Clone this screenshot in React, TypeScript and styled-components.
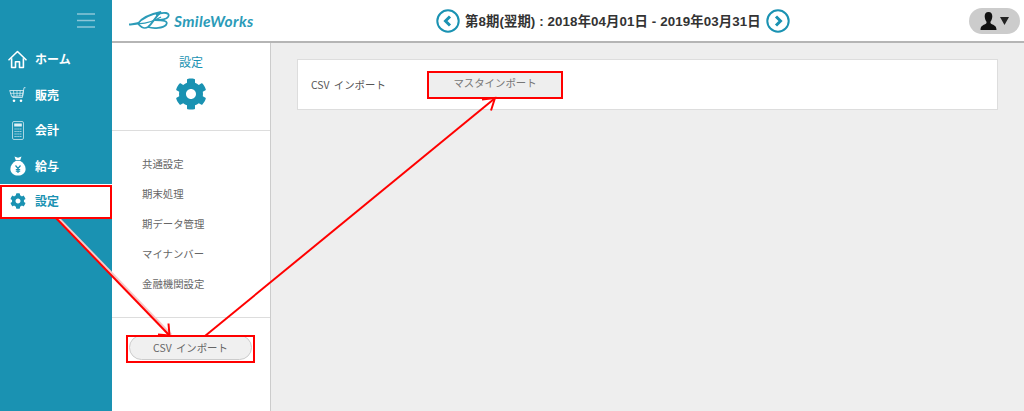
import React from "react";
import styled, { createGlobalStyle } from "styled-components";
import { FaCog } from "react-icons/fa";

const Global = createGlobalStyle`
  html, body { margin: 0; padding: 0; height: 100%; }
  body { font-family: "Noto Sans CJK JP", "Liberation Sans", sans-serif; background: #eee; overflow: hidden; }
  #root { height: 100%; }
`;

const TEAL = "#1a92b2";

const Shell = styled.div`
  position: relative;
  width: 1024px;
  height: 411px;
  display: grid;
  grid-template-columns: 112px 1fr;
  overflow: hidden;
`;

const Sidebar = styled.aside`
  background: ${TEAL};
  display: flex;
  flex-direction: column;
`;

const Burger = styled.button`
  height: 41px;
  border: 0;
  padding: 0 17px 0 0;
  background: none;
  display: flex;
  align-items: center;
  justify-content: flex-end;
`;

const NavList = styled.nav`
  display: flex;
  flex-direction: column;
  padding-top: 0.5px;
`;

const NavItem = styled.div<{ $active?: boolean }>`
  height: 35.5px;
  display: flex;
  align-items: center;
  color: ${(p) => (p.$active ? TEAL : "#fff")};
  background: ${(p) => (p.$active ? "#fff" : "transparent")};
  font-size: 12px;
  font-weight: 700;
  line-height: 1;
`;

const NavIcon = styled.span`
  width: 35px;
  flex: none;
  display: flex;
  justify-content: center;
  box-sizing: border-box;
`;

const Right = styled.div`
  display: flex;
  flex-direction: column;
  min-width: 0;
`;

const Header = styled.header`
  height: 41px;
  flex: none;
  background: #fff;
  border-bottom: 2px solid #b5b5b5;
  display: grid;
  grid-template-columns: 300px 1fr 55px;
  align-items: center;
`;

const Logo = styled.div`
  display: flex;
  align-items: center;
  padding-left: 17px;
  gap: 1px;
`;

const LogoWord = styled.span`
  font-family: "Lato", "Liberation Sans", sans-serif;
  font-style: italic;
  font-weight: 700;
  font-size: 15.5px;
  letter-spacing: 0.35px;
  color: #2b9bb8;
`;

const Period = styled.div`
  display: flex;
  align-items: center;
  justify-content: flex-start;
  padding-left: 24px;
  gap: 5px;
  color: #333;
  white-space: nowrap;
`;

const PeriodText = styled.span`
  font-family: "Liberation Sans", "Noto Sans CJK JP", sans-serif;
  font-size: 13.35px;
  font-weight: 700;
  letter-spacing: 0.1px;
`;

const UserPill = styled.div`
  width: 51px;
  height: 26px;
  border-radius: 13px;
  background: #ccc;
  display: flex;
  align-items: center;
  justify-content: center;
  gap: 3px;
  justify-self: start;
`;

const Body = styled.div`
  flex: 1;
  display: grid;
  grid-template-columns: 159px 1fr;
  min-height: 0;
`;

const SubPanel = styled.section`
  background: #fff;
  border-right: 1px solid #ccc;
  display: flex;
  flex-direction: column;
`;

const SubHead = styled.div`
  height: 77px;
  flex: none;
  border-bottom: 1px solid #ddd;
  display: flex;
  flex-direction: column;
  align-items: center;
  color: ${TEAL};
  font-size: 12px;
  padding-top: 10px;
  gap: 7px;
  line-height: 18px;
`;

const SubMenu = styled.ul`
  list-style: none;
  margin: 0;
  padding: 17px 0 0 30px;
  border-bottom: 1px solid #ddd;
  height: 187px;
  box-sizing: border-box;
  display: flex;
  flex-direction: column;
`;

const SubItem = styled.li`
  height: 30px;
  flex: none;
  display: flex;
  align-items: center;
  font-size: 10.4px;
  color: #666;
`;

const PillWrap = styled.div`
  padding: 17px 18px 0 17px;
`;

const PillButton = styled.div`
  height: 25px;
  border-radius: 13px;
  background: #f0f0f0;
  border: 1px solid #ccc;
  box-sizing: border-box;
  display: flex;
  align-items: center;
  justify-content: center;
  font-size: 10.4px;
  word-spacing: 2px;
  color: #666;
`;

const Main = styled.main`
  background: #eee;
  padding: 16px 26px 0 26px;
`;

const Card = styled.div`
  height: 51px;
  background: #fff;
  border: 1px solid #ddd;
  box-sizing: border-box;
  display: flex;
  align-items: center;
  padding: 0 0 0 13px;
`;

const CardLabel = styled.span`
  width: 117px;
  flex: none;
  font-size: 10.4px;
  word-spacing: 2px;
  color: #555;
`;

const CardButton = styled.div`
  width: 134px;
  height: 26px;
  background: #eee;
  display: flex;
  align-items: center;
  justify-content: center;
  padding-bottom: 2px;
  box-sizing: border-box;
  font-size: 10.4px;
  color: #777;
  position: relative;
  top: -1px;
`;

const Overlay = styled.svg`
  position: absolute;
  inset: 0;
  pointer-events: none;
`;

const Home = () => (
  <svg width="19" height="19" viewBox="0 0 19 19" fill="none" stroke="#fff" strokeWidth="1.6">
    <path d="M1 9.8 9.5 1.5 18 9.8" strokeLinecap="round" strokeLinejoin="round" />
    <path d="M3.6 8.2V17.5H7.5V11.8H11.5V17.5H15.4V8.2" strokeLinejoin="round" />
  </svg>
);

const Cart = () => (
  <svg width="17" height="16" viewBox="0 0 17 16" fill="none" stroke="#e6f3f7" strokeWidth=".8">
    <path d="M16.5 .7H15L13.4 10.5H3.5" />
    <path d="M.7 3.5H14.4L13.6 8.8 2.7 9.5Z" />
    <path d="M4.5 3.5 5 9.3M8 3.5V9.2M11.2 3.500 10.800 9M1.200 6.300H14" strokeWidth=".7" />
    <circle cx="5" cy="13.700" r="1.300" fill="#fff" stroke="none" />
    <circle cx="12" cy="13.700" r="1.300" fill="#fff" stroke="none" />
  </svg>
);

const Calc = () => (
  <svg width="12" height="19" viewBox="0 0 12 19" fill="none">
    <rect x=".5" y=".5" width="11" height="18" rx="1.500" stroke="#a9d6e2" />
    <rect x="2.200" y="2.500" width="7.600" height="3" fill="#dff0f5" />
    <path d="M2.500 8H9.500M2.500 10.500H9.500M2.500 13H9.500M2.500 15.500H9.500" stroke="#bfe0ea" strokeWidth="1.200" strokeDasharray="1.200 .7" />
  </svg>
);

const Bag = () => (
  <svg width="16" height="20" viewBox="0 0 16 20">
    <path d="M4.500 .5 8 1.800 11.500 .5 10.200 4.200H5.800Z" fill="#fff" />
    <path d="M5.600 5C2.500 7 .4 9.500.4 13c0 4 3.400 6.600 7.600 6.600s7.600-2.600 7.600-6.600C15.600 9.500 13.500 7 10.400 5Z" fill="#fff" />
    <path d="M5.500 9.500 8 12.500 10.500 9.500M8 12.500V17M5.800 13.500H10.200M5.800 15.200H10.200" fill="none" stroke={TEAL} strokeWidth="1.200" />
  </svg>
);

const Circle = ({ dir }: { dir: "l" | "r" }) => (
  <svg width="24" height="24" viewBox="0 0 24 24" fill="none">
    <circle cx="12" cy="12" r="10.700" stroke={TEAL} strokeWidth="2" />
    <path d={dir === "l" ? "M14 7.500 9.500 12 14 16.500" : "M10 7.500 14.500 12 10 16.500"} stroke={TEAL} strokeWidth="3" />
  </svg>
);

const User = () => (
  <svg width="17" height="18" viewBox="0 0 17 18" fill="#111">
    <path d="M8.500 0C5.800 0 4.600 2 4.700 4.500 4.800 6.800 5.600 8.500 6.500 9.700 6.800 11 6 11.800 4.500 12.600 2.500 13.600.5 14.300.5 18H16.500C16.500 14.300 14.500 13.600 12.500 12.600 11 11.800 10.200 11 10.500 9.700 11.400 8.500 12.200 6.800 12.300 4.500 12.400 2 11.200 0 8.500 0Z" />
  </svg>
);

const Caret = () => (
  <svg width="9" height="8" viewBox="0 0 9 8" fill="#222">
    <path d="M0 0H9L4.500 8Z" />
  </svg>
);

const LeafMark = () => (
  <svg width="44" height="22" viewBox="0 0 44 22" fill="none" stroke="#2b9bb8">
    <path d="M0 14.500C4 14 7 14 10 13" strokeWidth="2" />
    <path d="M9 13.500C13 8 22 4 32 2 26 7 24 13 19 17 14 20 11 16 9 13.500Z" strokeWidth="1.800" />
    <path d="M9 13.500C16 14 25 11 32 7" strokeWidth="1.200" />
    <path d="M27 5C35 1 42 3 39 7 37 10 30 10 26 10M26 10C34 10 40 11 37 15 34 18 25 19 19 17" strokeWidth="1.800" />
  </svg>
);

const items = ["共通設定", "期末処理", "期データ管理", "マイナンバー", "金融機関設定"];

export default function App() {
  return (
    <Shell>
      <Global />
      <Sidebar>
        <Burger aria-label="menu">
          <svg width="18" height="15" viewBox="0 0 18 15" stroke="#8cc6d8" strokeWidth="1.500">
            <path d="M0 1H18M0 7.500H18M0 14H18" />
          </svg>
        </Burger>
        <NavList>
          <NavItem><NavIcon><Home /></NavIcon>ホーム</NavItem>
          <NavItem><NavIcon><Cart /></NavIcon>販売</NavItem>
          <NavItem><NavIcon><Calc /></NavIcon>会計</NavItem>
          <NavItem><NavIcon><Bag /></NavIcon>給与</NavItem>
          <NavItem $active><NavIcon><FaCog size={16} color={TEAL} /></NavIcon>設定</NavItem>
        </NavList>
      </Sidebar>
      <Right>
        <Header>
          <Logo>
            <LeafMark />
            <LogoWord>SmileWorks</LogoWord>
          </Logo>
          <Period>
            <Circle dir="l" />
            <PeriodText>第8期(翌期) : 2018年04月01日 - 2019年03月31日</PeriodText>
            <Circle dir="r" />
          </Period>
          <UserPill><User /><Caret /></UserPill>
        </Header>
        <Body>
          <SubPanel>
            <SubHead>
              設定
              <FaCog size={32} color={TEAL} />
            </SubHead>
            <SubMenu>
              {items.map((t) => <SubItem key={t}>{t}</SubItem>)}
            </SubMenu>
            <PillWrap><PillButton>CSV インポート</PillButton></PillWrap>
          </SubPanel>
          <Main>
            <Card>
              <CardLabel>CSV インポート</CardLabel>
              <CardButton>マスタインポート</CardButton>
            </Card>
          </Main>
        </Body>
      </Right>
      <Overlay width="1024" height="411" viewBox="0 0 1024 411" fill="none">
        <path d="M58 218 171 335" stroke="#f6c9c9" strokeWidth="3" />
        <g stroke="#f00" strokeWidth="2">
          <rect x="1" y="186" width="110" height="32" />
          <rect x="127" y="336" width="127" height="26" />
          <rect x="428" y="72" width="134" height="26" />
          <path d="M56 218 169 335" />
          <path d="M158 334.500 169.500 335.500 168.500 323.500" />
          <path d="M205 336 494 99" />
          <path d="M482 99.500 495 98 491 110.500" />
        </g>
      </Overlay>
    </Shell>
  );
}
